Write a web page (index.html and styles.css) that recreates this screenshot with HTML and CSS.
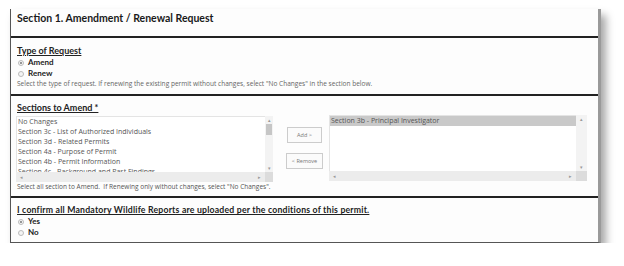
FILE: index.html
```html
<!DOCTYPE html>
<html lang="en">
<head>
  <meta charset="UTF-8">
  <title>Section 1. Amendment / Renewal Request</title>
  <link rel="stylesheet" href="styles.css">
</head>
<body>
  <div class="card">
    <div class="card-head">Section 1. Amendment / Renewal Request</div>

    <div class="block block-type">
      <div class="label">Type of Request</div>
      <div class="radio"><span class="dot on"></span>Amend</div>
      <div class="radio"><span class="dot"></span>Renew</div>
      <div class="help">Select the type of request. If renewing the existing permit without changes, select "No Changes" in the section below.</div>
    </div>

    <div class="block block-sections">
      <div class="label">Sections to Amend *</div>
      <div class="picker">
        <div class="listbox left">
          <div class="items">
            <div class="item">No Changes</div>
            <div class="item">Section 3c - List of Authorized Individuals</div>
            <div class="item">Section 3d - Related Permits</div>
            <div class="item">Section 4a - Purpose of Permit</div>
            <div class="item">Section 4b - Permit Information</div>
            <div class="item">Section 4c - Background and Past Findings</div>
          </div>
          <div class="vbar"><span class="arr">&#9652;</span><span class="thumb"></span><span class="fill"></span><span class="arr">&#9662;</span></div>
          <div class="hbar"><span class="arr">&#9666;</span><span class="arr">&#9656;</span></div>
          <div class="corner"></div>
        </div>
        <div class="buttons">
          <div class="btn">Add &gt;</div>
          <div class="btn">&lt; Remove</div>
        </div>
        <div class="listbox right">
          <div class="items">
            <div class="item sel">Section 3b - Principal Investigator</div>
          </div>
          <div class="vbar"><span class="arr">&#9652;</span><span class="fill"></span><span class="arr">&#9662;</span></div>
          <div class="hbar"><span class="arr">&#9666;</span><span class="arr">&#9656;</span></div>
          <div class="corner"></div>
        </div>
      </div>
      <div class="help dark">Select all section to Amend.&nbsp; If Renewing only without changes, select "No Changes".</div>
    </div>

    <div class="block block-confirm">
      <div class="label wide">I confirm all Mandatory Wildlife Reports are uploaded per the conditions of this permit.</div>
      <div class="radio"><span class="dot on"></span>Yes</div>
      <div class="radio"><span class="dot"></span>No</div>
    </div>
  </div>
</body>
</html>
```

FILE: styles.css
```css
body {
  margin: 0;
  padding: 9px 0 0 10px;
  background: #fff;
  font-family: "Open Sans", Arial, sans-serif;
  color: #222;
}

.card {
  width: 587px;
  height: 233px;
  background: #fdfdfd;
  border-left: 1px solid #555;
  border-right: 3px solid #9a9a9a;
  border-bottom: 1px solid #555;
  box-shadow: 5px 6px 8px rgba(0, 0, 0, 0.35);
  display: flex;
  flex-direction: column;
}

.card-head {
  height: 27px;
  flex: none;
  padding-left: 6px;
  font-family: Lato, "Open Sans", sans-serif;
  font-size: 10.5px;
  font-weight: 700;
  line-height: 19px;
  color: #1a1a1a;
  border-bottom: 2px solid #222;
}

.block {
  flex: none;
  padding-left: 6px;
  border-bottom: 2px solid #222;
  box-sizing: border-box;
}

.block-type {
  height: 58px;
  padding-top: 7px;
}

.block-sections {
  height: 102px;
  padding-top: 6px;
}

.block-confirm {
  border-bottom: none;
  padding-top: 6px;
}

.label {
  font-family: Lato, "Open Sans", sans-serif;
  font-size: 9px;
  font-weight: 700;
  text-decoration: underline;
  line-height: 11px;
  margin-bottom: 1px;
}

.label.wide {
  font-size: 8.7px;
  letter-spacing: 0.2px;
  margin-bottom: 1px;
}

.radio {
  display: flex;
  align-items: center;
  font-family: Lato, "Open Sans", sans-serif;
  font-size: 8px;
  font-weight: 700;
  line-height: 11px;
  padding-left: 1px;
}

.dot {
  width: 4px;
  height: 4px;
  border: 1px solid #bbb;
  border-radius: 50%;
  background: #f4f4f4;
  margin-right: 4px;
  position: relative;
}

.dot.on::after {
  content: '';
  position: absolute;
  left: 1px;
  top: 1px;
  width: 2px;
  height: 2px;
  border-radius: 50%;
  background: #777;
}

.help {
  font-size: 6.55px;
  color: #666;
  line-height: 9px;
  white-space: nowrap;
}

.help.dark {
  font-size: 6.5px;
  color: #555;
}

.picker {
  display: flex;
  align-items: flex-start;
  margin-top: 3px;
}

.listbox {
  display: grid;
  grid-template-rows: 56px 10px;
  background: #fff;
  font-size: 7px;
  color: #555;
}

.listbox.left {
  grid-template-columns: 249px 8px;
  margin-left: -1px;
}

.listbox.right {
  grid-template-columns: 247px 11px;
  margin-top: -1px;
}

.items {
  overflow: hidden;
  border: 1px solid #e4e4e4;
  border-right: none;
  border-bottom: none;
}

.item {
  line-height: 10px;
  padding-left: 1px;
  white-space: nowrap;
}

.item.sel {
  background: #c9c9c9;
}

.vbar {
  background: #f3f3f3;
  display: flex;
  flex-direction: column;
  align-items: center;
}

.vbar .arr,
.hbar .arr {
  font-size: 5px;
  line-height: 8px;
  color: #999;
}

.vbar .thumb {
  width: 6px;
  height: 11px;
  background: #c6c6c6;
}

.vbar .fill {
  flex: 1;
}

.hbar {
  background: #ececec;
  display: flex;
  justify-content: space-between;
  align-items: center;
  padding: 0 4px;
}

.corner {
  background: #dcdcdc;
}

.buttons {
  width: 39px;
  margin: 11px 5px 0 12px;
  display: flex;
  flex-direction: column;
  align-items: center;
  gap: 10px;
}

.btn {
  height: 14px;
  line-height: 14px;
  border: 1px solid #ccc;
  background: #fbfbfb;
  font-size: 5.5px;
  color: #777;
  text-align: center;
  padding: 0 5px;
}

.btn:first-child {
  width: 25px;
  padding: 0 4px;
}
```
